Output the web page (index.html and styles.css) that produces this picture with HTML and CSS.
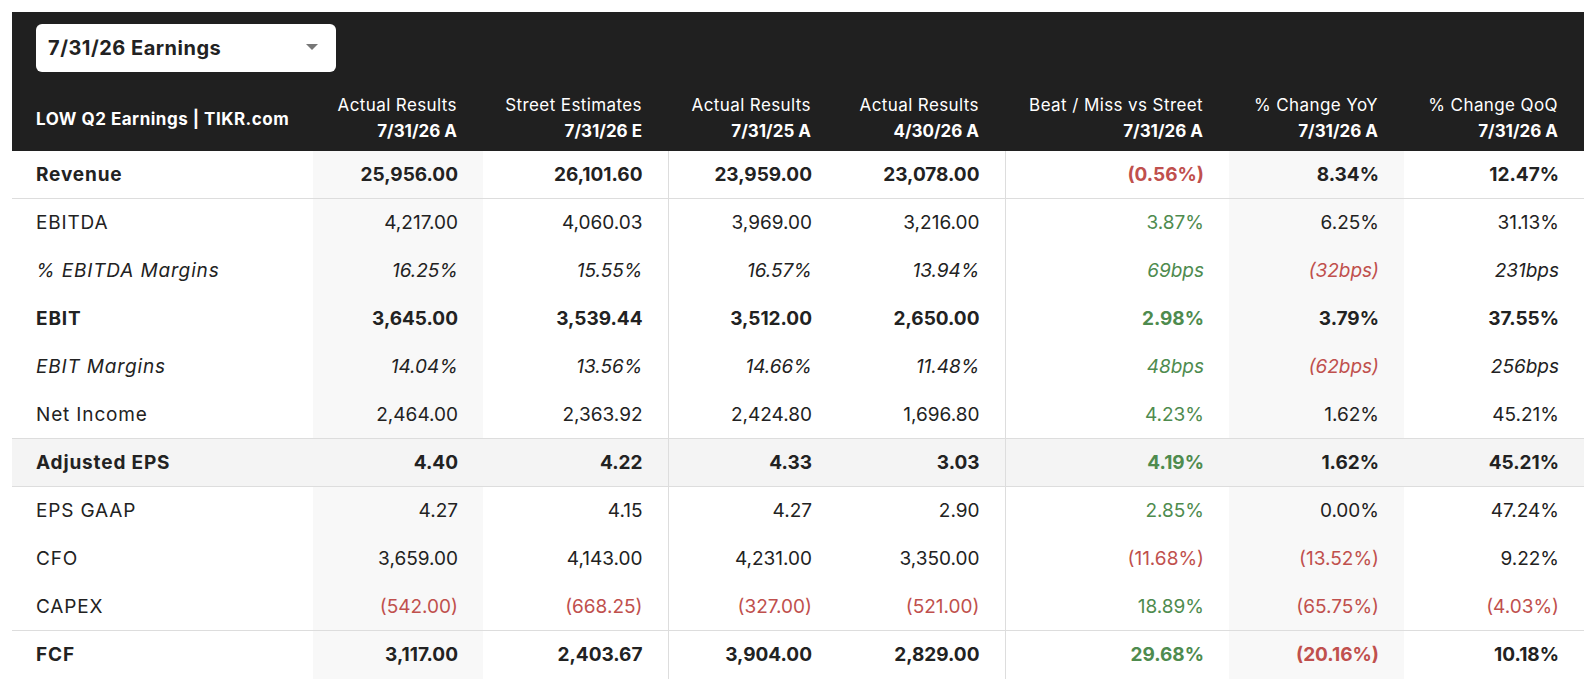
FILE: index.html
```html
<!DOCTYPE html>
<html lang="en">
<head>
<meta charset="utf-8">
<title>LOW Q2 Earnings | TIKR.com</title>
<link rel="stylesheet" href="styles.css">
</head>
<body>
<div class="panel">
  <div class="toolbar">
    <div class="select">
      <span class="select-label">7/31/26 Earnings</span>
      <span class="caret"></span>
    </div>
  </div>
  <table class="earnings">
    <colgroup>
      <col class="c-label">
      <col class="c-1">
      <col class="c-2">
      <col class="c-3">
      <col class="c-4">
      <col class="c-5">
      <col class="c-6">
      <col class="c-7">
    </colgroup>
    <thead>
      <tr>
        <th class="title">LOW Q2 Earnings | TIKR.com</th>
        <th><span class="h1">Actual Results</span><span class="h2">7/31/26 A</span></th>
        <th><span class="h1">Street Estimates</span><span class="h2">7/31/26 E</span></th>
        <th><span class="h1">Actual Results</span><span class="h2">7/31/25 A</span></th>
        <th><span class="h1">Actual Results</span><span class="h2">4/30/26 A</span></th>
        <th><span class="h1">Beat / Miss vs Street</span><span class="h2">7/31/26 A</span></th>
        <th><span class="h1">% Change YoY</span><span class="h2">7/31/26 A</span></th>
        <th><span class="h1">% Change QoQ</span><span class="h2">7/31/26 A</span></th>
      </tr>
    </thead>
    <tbody>
      <tr class="bold line">
        <td>Revenue</td><td class="sh">25,956.00</td><td class="vb">26,101.60</td><td>23,959.00</td><td class="vb">23,078.00</td><td class="neg">(0.56%)</td><td class="sh">8.34%</td><td>12.47%</td>
      </tr>
      <tr>
        <td>EBITDA</td><td class="sh">4,217.00</td><td class="vb">4,060.03</td><td>3,969.00</td><td class="vb">3,216.00</td><td class="pos">3.87%</td><td class="sh">6.25%</td><td>31.13%</td>
      </tr>
      <tr class="ital">
        <td>% EBITDA Margins</td><td class="sh">16.25%</td><td class="vb">15.55%</td><td>16.57%</td><td class="vb">13.94%</td><td class="pos">69bps</td><td class="sh neg">(32bps)</td><td>231bps</td>
      </tr>
      <tr class="bold">
        <td>EBIT</td><td class="sh">3,645.00</td><td class="vb">3,539.44</td><td>3,512.00</td><td class="vb">2,650.00</td><td class="pos">2.98%</td><td class="sh">3.79%</td><td>37.55%</td>
      </tr>
      <tr class="ital">
        <td>EBIT Margins</td><td class="sh">14.04%</td><td class="vb">13.56%</td><td>14.66%</td><td class="vb">11.48%</td><td class="pos">48bps</td><td class="sh neg">(62bps)</td><td>256bps</td>
      </tr>
      <tr class="line">
        <td>Net Income</td><td class="sh">2,464.00</td><td class="vb">2,363.92</td><td>2,424.80</td><td class="vb">1,696.80</td><td class="pos">4.23%</td><td class="sh">1.62%</td><td>45.21%</td>
      </tr>
      <tr class="bold line hl">
        <td>Adjusted EPS</td><td class="sh">4.40</td><td class="vb">4.22</td><td>4.33</td><td class="vb">3.03</td><td class="pos">4.19%</td><td class="sh">1.62%</td><td>45.21%</td>
      </tr>
      <tr>
        <td>EPS GAAP</td><td class="sh">4.27</td><td class="vb">4.15</td><td>4.27</td><td class="vb">2.90</td><td class="pos">2.85%</td><td class="sh">0.00%</td><td>47.24%</td>
      </tr>
      <tr>
        <td>CFO</td><td class="sh">3,659.00</td><td class="vb">4,143.00</td><td>4,231.00</td><td class="vb">3,350.00</td><td class="neg">(11.68%)</td><td class="sh neg">(13.52%)</td><td>9.22%</td>
      </tr>
      <tr class="line">
        <td>CAPEX</td><td class="sh neg">(542.00)</td><td class="vb neg">(668.25)</td><td class="neg">(327.00)</td><td class="vb neg">(521.00)</td><td class="pos">18.89%</td><td class="sh neg">(65.75%)</td><td class="neg">(4.03%)</td>
      </tr>
      <tr class="bold">
        <td>FCF</td><td class="sh">3,117.00</td><td class="vb">2,403.67</td><td>3,904.00</td><td class="vb">2,829.00</td><td class="pos">29.68%</td><td class="sh neg">(20.16%)</td><td>10.18%</td>
      </tr>
    </tbody>
  </table>
</div>
</body>
</html>
```

FILE: styles.css
```css
html, body {
  margin: 0;
  padding: 0;
  background: #ffffff;
}
body {
  padding: 12px 0 0 12px;
  font-family: Inter, "Noto Sans", "Liberation Sans", sans-serif;
  font-variation-settings: "opsz" 14;
  font-optical-sizing: none;
  color: #222222;
}
.panel {
  width: 1572px;
}
.toolbar {
  background: #202020;
  padding: 12px 24px 12px 24px;
  display: flex;
}
.select {
  width: 300px;
  height: 48px;
  box-sizing: border-box;
  background: #ffffff;
  border-radius: 6px;
  display: flex;
  align-items: center;
  justify-content: space-between;
  padding: 0 18px 0 12px;
}
.select-label {
  font-size: 20px;
  font-weight: 700;
  color: #222222;
  letter-spacing: 0.5px;
}
.caret {
  width: 0;
  height: 0;
  border-left: 6px solid transparent;
  border-right: 6px solid transparent;
  border-top: 6px solid #777777;
  margin-bottom: 2px;
}
.earnings {
  width: 1572px;
  table-layout: fixed;
  border-collapse: collapse;
  border-spacing: 0;
}
.c-label { width: 301px; }
.c-1 { width: 170px; }
.c-2 { width: 185px; }
.c-3 { width: 169px; }
.c-4 { width: 168px; }
.c-5 { width: 224px; }
.c-6 { width: 175px; }
.c-7 { width: 180px; }

.earnings thead th {
  background: #202020;
  color: #ffffff;
  text-align: right;
  vertical-align: middle;
  padding: 0 26px 0 0;
  height: 67px;
  box-sizing: border-box;
  font-weight: 400;
  font-size: 17px;
}
.earnings thead th.title {
  text-align: left;
  padding-left: 24px;
  padding-right: 0;
  font-weight: 700;
  font-size: 17px;
  letter-spacing: 0.5px;
  padding-top: 2px;
  white-space: nowrap;
}
.h1, .h2 {
  display: block;
  line-height: 26px;
  white-space: nowrap;
}
.h1 {
  letter-spacing: 0.4px;
}
.h2 {
  font-weight: 700;
}
.earnings tbody td {
  height: 47px;
  padding: 0 25px 0 0;
  text-align: right;
  font-size: 19px;
  white-space: nowrap;
  border-bottom: 1px solid transparent;
}
.earnings tbody td:first-child {
  text-align: left;
  padding-left: 24px;
  letter-spacing: 0.85px;
}
.earnings tbody td.sh {
  background: #f8f8f8;
}
.earnings tbody td.vb {
  border-right: 1px solid #dddddd;
}
.earnings tbody tr.line td {
  border-bottom: 1px solid #dddddd;
}
.earnings tbody tr.hl td {
  background: #f4f4f4;
}
.bold td {
  font-weight: 700;
}
.ital td {
  font-style: italic;
}
.neg {
  color: #c0504d;
}
.pos {
  color: #4e8b4e;
}
```
